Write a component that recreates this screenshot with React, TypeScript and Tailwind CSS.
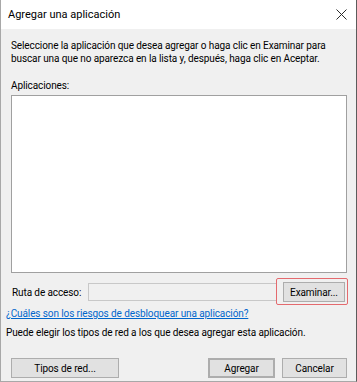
import React from "react";

function CloseIcon() {
  return (
    <svg width="11" height="11" viewBox="0 0 11 11" className="block">
      <path d="M0.5 0.5 L10.5 10.5 M10.5 0.5 L0.5 10.5" stroke="#2b2b2b" strokeWidth="1" fill="none" />
    </svg>
  );
}

function Btn({ children, className = "" }: { children: React.ReactNode; className?: string }) {
  return (
    <div
      className={
        "flex items-center justify-center h-[20px] bg-[#e1e1e1] border border-[#adadad] text-[10px] text-black " +
        className
      }
    >
      {children}
    </div>
  );
}

export default function App() {
  return (
    <div
      className="w-[357px] h-[382px] flex flex-col bg-[#f0f0f0] border-l border-b border-r border-l-[#a8a8a8] border-b-[#a8a8a8] border-r-[#5c5c5c] text-black tracking-[-0.1px]"
      style={{ fontFamily: "Roboto, 'Liberation Sans', sans-serif" }}
    >
      {/* title bar */}
      <div className="h-[29px] shrink-0 bg-white flex items-center justify-between pl-[7px] pr-[9px]">
        <span className="text-[11px] tracking-normal text-black leading-none">Agregar una aplicación</span>
        <CloseIcon />
      </div>

      {/* body */}
      <div className="flex flex-col pl-[5px] pr-[9px] text-[10px] leading-[13px]">
        <p className="pl-[5px] pt-[10px]">
          Seleccione la aplicación que desea agregar o haga clic en Examinar para
          <br />
          buscar una que no aparezca en la lista y, después, haga clic en Aceptar.
        </p>

        <div className="pl-[5px] mt-[14px]">Aplicaciones:</div>

        <div className="ml-[5px] mt-[3px] h-[178px] bg-white border border-[#a0a0a0]" />

        <div className="ml-[5px] mt-[10px] h-[18px] flex items-center">
          <span className="w-[77px] shrink-0 pl-[1px]">Ruta de acceso:</span>
          <div className="w-[189px] h-[18px] shrink-0 border border-[#c8c8c8] bg-[#f0f0f0]" />
          <div className="relative ml-[6px] w-[62px]">
            <Btn className="h-[19px]">Examinar...</Btn>
            <div className="absolute -left-[7px] -right-[3px] -top-[4px] -bottom-[3px] border border-[#e46a6e] rounded-[2px] pointer-events-none" />
          </div>
        </div>

        <div className="mt-[6px]">
          <span className="text-[#0066cc] underline">¿Cuáles son los riesgos de desbloquear una aplicación?</span>
        </div>

        <div className="mt-[6px]">Puede elegir los tipos de red a los que desea agregar esta aplicación.</div>

        <div className="ml-[5px] mt-[19px] flex items-center">
          <Btn className="w-[108px]">Tipos de red...</Btn>
          <div className="flex-1" />
          <Btn className="w-[67px] border-2 border-[#0078d7]">Agregar</Btn>
          <Btn className="w-[65px] ml-[7px]">Cancelar</Btn>
        </div>
      </div>
    </div>
  );
}
